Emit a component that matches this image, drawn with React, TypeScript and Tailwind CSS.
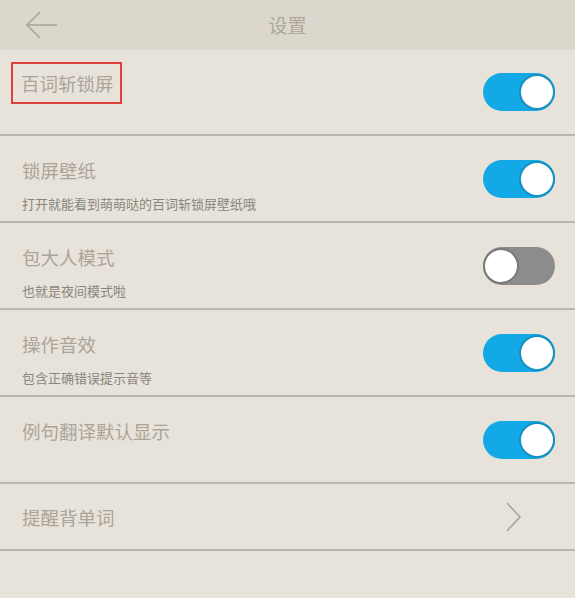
import { useState } from 'react';

type Item = {
  title: string;
  sub?: string;
  kind: 'toggle' | 'link';
  on?: boolean;
  boxed?: boolean;
};

const ITEMS: Item[] = [
  { title: '百词斩锁屏', kind: 'toggle', on: true, boxed: true },
  { title: '锁屏壁纸', sub: '打开就能看到萌萌哒的百词斩锁屏壁纸哦', kind: 'toggle', on: true },
  { title: '包大人模式', sub: '也就是夜间模式啦', kind: 'toggle', on: false },
  { title: '操作音效', sub: '包含正确错误提示音等', kind: 'toggle', on: true },
  { title: '例句翻译默认显示', kind: 'toggle', on: true },
  { title: '提醒背单词', kind: 'link' },
];

function Toggle({ initial }: { initial: boolean }) {
  const [on, setOn] = useState(initial);
  return (
    <button
      onClick={() => setOn(!on)}
      className={`relative flex h-[38px] w-[72px] items-center rounded-full ${on ? 'bg-[#13a8e6] justify-end' : 'bg-[#8c8c8a] justify-start'}`}
    >
      <span
        className={`h-[36px] w-[36px] rounded-full bg-white border-2 ${on ? 'border-[#1790c2]' : 'border-[#7a7a78]'}`}
      />
    </button>
  );
}

export default function App() {
  return (
    <div className="h-[598px] w-[575px] overflow-hidden bg-[#e7e3da] font-['Noto_Sans_CJK_SC',sans-serif]">
      <div className="relative flex h-[50px] items-center justify-center bg-[#dcd7cd]">
        <svg className="absolute left-[25px] top-[11px]" width="34" height="30" viewBox="0 0 34 30" fill="none" stroke="#aaa59c" strokeWidth="1.6">
          <path d="M15 1 L2 14 L15 27" />
          <path d="M2 14 H32" />
        </svg>
        <span className="text-[19px] text-[#aca69b]">设置</span>
      </div>

      {ITEMS.map((it, i) => {
        let offset = '';
        if (it.boxed) offset = '-mt-[18px]';
        else if (it.sub) offset = 'mt-[12px]';
        else if (it.kind === 'toggle') offset = '-mt-[18px]';
        return (
          <div key={i}>
            <div
              className={`flex items-center justify-between pl-[22px] pr-[20px] ${it.kind === 'link' ? 'h-[65px]' : i === 0 ? 'h-[84px]' : 'h-[85px]'}`}
            >
              <div className={`flex flex-col ${offset}`}>
                <span
                  className={`text-[18.5px] leading-[26px] text-[#aca498] ${it.boxed ? '-ml-[11px] pl-[8px] pr-[6px] py-[6px] border-2 border-[#e0403c]' : ''}`}
                >
                  {it.title}
                </span>
                {it.sub && <span className="mt-[12px] text-[13px] leading-[18px] text-[#8a857c]">{it.sub}</span>}
              </div>
              {it.kind === 'toggle' ? (
                <Toggle initial={!!it.on} />
              ) : (
                <svg className="mr-[33px]" width="17" height="30" viewBox="0 0 17 30" fill="none" stroke="#a9a49c" strokeWidth="1.6">
                  <path d="M2 1 L15 15 L2 29" />
                </svg>
              )}
            </div>
            <div className="h-[2px] bg-[#b9b7b0]" />
          </div>
        );
      })}
    </div>
  );
}
